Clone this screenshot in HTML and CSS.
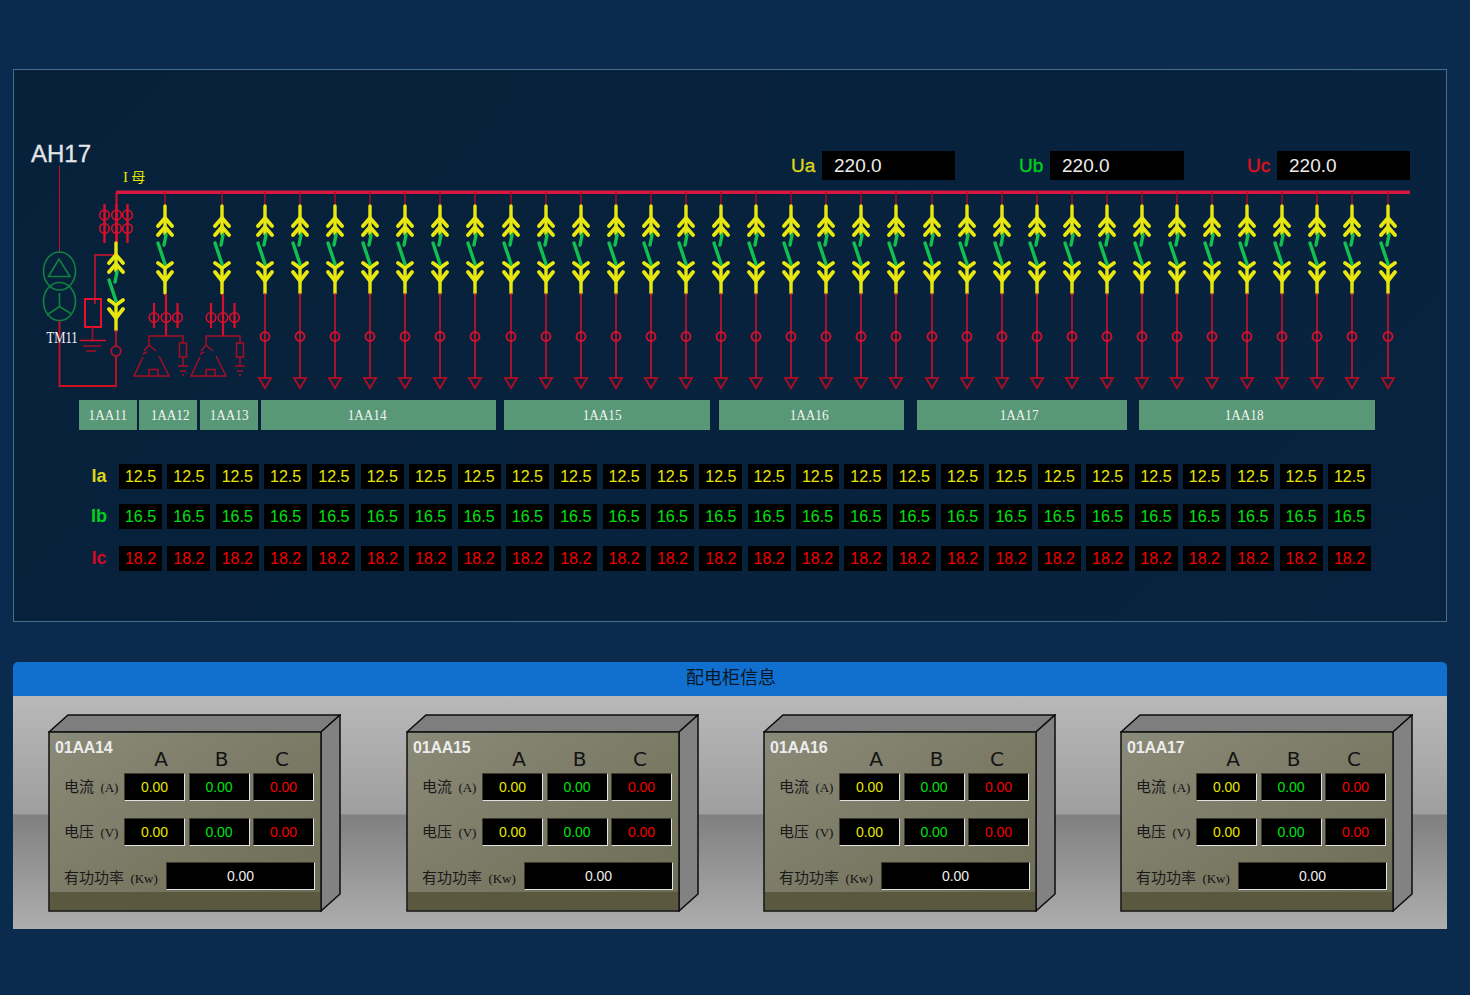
FILE: index.html
```html
<!DOCTYPE html>
<html lang="zh"><head><meta charset="utf-8"><title>AH17</title><link rel="stylesheet" href="styles.css"></head>
<body>
<div id="app"></div>
<script src="app.js"></script>
</body></html>
```
FILE: styles.css
```css
*{box-sizing:border-box}
html,body{margin:0;height:995px;overflow:hidden}
body{background:#0a2b4d;font-family:"Liberation Sans",Arial,sans-serif;padding:69px 23px 0 13px}
.panel{height:553px;border:1px solid #46708a;background:linear-gradient(135deg,#07213a,#08233f)}
.diagram{width:1432px;height:330px;display:block}
.t-title{fill:#e4e6e8;font-size:24px;stroke:#e4e6e8;stroke-width:.3px}
.t-bus{fill:#e6e600;font-size:14px;font-family:"Noto Sans CJK SC",sans-serif}
.t-bus-i{font-family:"Liberation Serif",serif;font-size:15px}
.t-phase{font-size:19px;stroke-width:.35px}
.t-ua{fill:#dcd41a;stroke:#dcd41a}.t-ub{fill:#00d01c;stroke:#00d01c}.t-uc{fill:#e0101c;stroke:#e0101c}
.t-val{fill:#ececec;font-size:19px}
.t-tm{fill:#f4f4f4;font-size:16px;font-family:"Liberation Serif",serif}
.cabs{display:flex;margin-left:65px;height:30px}
.cab{height:30px;background:#589877;color:#f4f4f4;font:15px/30px "Liberation Serif",serif;text-align:center}
.cab span{display:inline-block;transform:scaleX(.88)}
.row{display:flex;margin-left:70px;height:25px}
.row-ia{margin-top:34px}.row-ib{margin-top:15px}.row-ic{margin-top:17px}
.row-label{width:30px;margin-right:5px;font-size:18px;font-weight:700;line-height:24px;text-align:center}
.cells{display:flex;gap:5.36px}
.cell{width:43px;height:25px;background:#000;font-size:16px;line-height:25px;text-align:center}
.y{color:#e6e600}.g{color:#00e010}.r{color:#f00000}
.lbl-y{color:#dcd41a}.lbl-g{color:#00d01c}.lbl-r{color:#d20a24}
.info{margin-top:40px}
.info-head{height:34px;background:#1170cf;border-radius:5px 5px 0 0;color:#0a1826;font:18px/28px "Noto Sans CJK SC",sans-serif;text-align:center;padding-left:2px}
.info-body{display:flex;height:233px;padding:18px 0 0 35px;gap:64px;background:linear-gradient(#b9b9b9 0,#9e9e9e 118px,#808080 119px,#aeaeae 233px)}
.box{position:relative;width:293px;height:198px;flex:none}
.box:nth-child(2){margin-left:1px}
.box-art{position:absolute;inset:0;width:293px;height:198px}
.box-face{position:absolute;left:1px;top:18px;width:272px;height:179px;color:#141414}
.box-top{display:flex;height:41px}
.box-name{width:76px;margin:7px 0 0 6px;color:#ececec;font-size:16px;font-weight:700;letter-spacing:-.2px;white-space:nowrap}
.box-cols{display:flex;gap:.5px;margin-top:15px}
.box-cols span{width:60px;text-align:center;font:20px/24px "DejaVu Sans",sans-serif}
.box-row{display:flex;margin-left:15px;height:28px;gap:3.5px}
.box-row-v{margin-top:17px}.box-row-p{margin-top:16px}
.box-label{width:56.500px;font:15px/26px "Noto Sans CJK SC",sans-serif;white-space:nowrap;color:#1a1a1a}
.box-label small{margin-left:3px;font:13px "Liberation Serif",serif;color:#111}
.box-row-p .box-label{width:98.500px;line-height:30px}
.box-val{width:61px;height:28px;background:#000;border:1px solid;border-color:#3c3b2e #e2e2e2 #e2e2e2 #3c3b2e;font-size:14px;line-height:26px;text-align:center}
.box-val-w{width:149px;color:#eee}
```
FILE: app.js
```js
const xs=[265,300,335,370,405,440,475,511,546,581,616,651,686,721,756,791,826,861,896,932,967,1002,1037,1072,1107,1142,1177,1212,1247,1282,1317,1352,1388];
const R='#d8102c',DR='#a50f25',Y='#e8e810',G='#10c050';
function sw(x,y){
 const up=(p,w)=>`M${x-7} ${y+w}L${x} ${y+p}L${x+7} ${y+w}`;
 return `<g fill="none" stroke-linecap="round">
 <path d="M${x} ${y}V${y+28}M${x} ${y+62}V${y+87}" stroke="${Y}" stroke-width="3.400"/>
 <path d="${up(12,20)}${up(21,29)}${up(62,57)}${up(75,66)}" stroke="${Y}" stroke-width="3.800"/>
 <path d="M${x+1} ${y+29}L${x-1} ${y+39}M${x-7} ${y+37}L${x} ${y+58}" stroke="${G}" stroke-width="3.400"/></g>`;
}
function feeder(x){
 return `<path d="M${x} 192V208" stroke="${DR}" stroke-width="1.5"/>`+sw(x,206)+
 `<path d="M${x} 293V378" stroke="${R}" stroke-width="1.5"/><circle cx="${x}" cy="336.500" r="4.500" fill="none" stroke="${R}" stroke-width="1.8"/>
 <path d="M${x-6} 378H${x+6}L${x} 388Z" fill="none" stroke="${DR}" stroke-width="2"/>`;
}
function pt(x){
 return `<path d="M${x} 192V206" stroke="${DR}" stroke-width="1.5"/>`+sw(x,206)+
 `<path d="M${x+1} 294V336" stroke="${R}" stroke-width="2.2"/>
 <g fill="none" stroke="${R}" stroke-width="1.6"><path d="M${x-11} 303V328M${x+12.500} 303V328" stroke-width="2.2"/>
 <circle cx="${x-11}" cy="317.500" r="4.800"/><circle cx="${x+1}" cy="317.500" r="4.800"/><circle cx="${x+12.500}" cy="317.500" r="4.800"/></g>
 <g fill="none" stroke="${DR}" stroke-width="1.5"><path d="M${x-16} 345V336H${x+18}V343"/>
 <path d="M${x-22} 357L${x-31} 376H${x+4}L${x-6} 356M${x-16} 345L${x-21} 351M${x-16} 345L${x-9} 351M${x-22} 354L${x-18} 352"/><path d="M${x-16} 376V369.500H${x-7}V376"/>
 <rect x="${x+14.500}" y="343" width="7" height="14"/><path d="M${x+18} 357V366M${x+13} 366H${x+23}M${x+15} 371H${x+21}M${x+17} 375H${x+19}"/></g>`;
}
let s=`<svg class="diagram" viewBox="14 70 1432 330" xmlns="http://www.w3.org/2000/svg">`;
s+=`<text class="t-title" x="31" y="162">AH17</text>
<text class="t-bus" x="123" y="182"><tspan class="t-bus-i">I</tspan> 母</text>
<rect x="116" y="190.500" width="1294" height="3.500" fill="#d81840"/>
<text class="t-phase t-ua" x="791" y="172">Ua</text><rect x="822" y="151" width="133" height="29"/><text class="t-val" x="834" y="172">220.0</text>
<text class="t-phase t-ub" x="1019" y="172">Ub</text><rect x="1050" y="151" width="134" height="29"/><text class="t-val" x="1062" y="172">220.0</text>
<text class="t-phase t-uc" x="1247" y="172">Uc</text><rect x="1277" y="151" width="133" height="29"/><text class="t-val" x="1289" y="172">220.0</text>`;
s+=`<path d="M59.500 166V252" stroke="#c01030" stroke-width="1"/>
<g fill="none" stroke="#12803f" stroke-width="1.6"><ellipse cx="59.500" cy="271" rx="16" ry="19"/><ellipse cx="59.500" cy="301.500" rx="16" ry="19"/>
<path d="M59 259L48.500 276.500H70ZM59.500 293V306.500M59.500 306.500L47 315M59.500 306.500L71.500 314"/></g>
<path d="M59.500 321V386H116V356" fill="none" stroke="#cc1020" stroke-width="1.8"/>
<circle cx="116" cy="351" r="4.800" fill="none" stroke="#b81028" stroke-width="1.8"/>
<path d="M116.500 192V245" stroke="${R}" stroke-width="2"/>
<g fill="none" stroke="${R}" stroke-width="1.6"><path d="M104.500 204V243M116.500 204V243M127.500 204V243" stroke-width="2.400"/>
<circle cx="104.500" cy="215" r="4.800"/><circle cx="116.500" cy="215" r="4.800"/><circle cx="127.500" cy="215" r="4.800"/>
<circle cx="104.500" cy="228.500" r="4.800"/><circle cx="116.500" cy="228.500" r="4.800"/><circle cx="127.500" cy="228.500" r="4.800"/></g>
<path d="M95 304V255H115" fill="none" stroke="#a01830" stroke-width="2"/>`+sw(116,243)+
`<path d="M116 330V346" stroke="${R}" stroke-width="1.5"/>
<rect x="85" y="299" width="16" height="28" fill="none" stroke="#e8102a" stroke-width="2"/>
<path d="M92.500 327V340" stroke="${DR}" stroke-width="1.6"/><path d="M79.500 340.500H106" stroke="${R}" stroke-width="1.6"/><path d="M83 346H101M86 351H96" stroke="${DR}" stroke-width="1.6"/>
<text class="t-tm" x="46.500" y="342.500" textLength="31" lengthAdjust="spacingAndGlyphs">TM11</text>`;
s+=pt(165)+pt(222);
xs.forEach(x=>s+=feeder(x));
s+=`</svg>`;
// name, width, gap before, text offset from box centre
const cabs=[['1AA11',58,0,0],['1AA12',58,2,2],['1AA13',58,3,0],['1AA14',235,3,-11.5],['1AA15',206,8,-5],['1AA16',185,9,-2.5],['1AA17',210,13,-3],['1AA18',236,12,-13]];
const rows=[['Ia','12.5','y','lbl-y','ia'],['Ib','16.5','g','lbl-g','ib'],['Ic','18.2','r','lbl-r','ic']];
let h=`<div class="panel">${s}<div class="cabs">`+cabs.map(c=>`<div class="cab" style="width:${c[1]}px;margin-left:${c[2]}px;padding-${c[3]>0?'left':'right'}:${Math.abs(c[3])*2}px"><span>${c[0]}</span></div>`).join('')+`</div>`;
rows.forEach(r=>{h+=`<div class="row row-${r[4]}"><div class="row-label ${r[3]}">${r[0]}</div><div class="cells">`+Array(26).fill(`<div class="cell ${r[2]}">${r[1]}</div>`).join('')+`</div></div>`});
h+=`</div><div class="info"><div class="info-head">配电柜信息</div><div class="info-body">`;
['01AA14','01AA15','01AA16','01AA17'].forEach(n=>{
 const vals=`<div class="box-val y">0.00</div><div class="box-val g">0.00</div><div class="box-val r">0.00</div>`;
 h+=`<div class="box"><svg class="box-art" viewBox="0 0 293 198"><defs><linearGradient id="f${n}" x1="0" y1="0" x2="1" y2="1"><stop offset="0" stop-color="#8a8a78"/><stop offset="1" stop-color="#6c6b54"/></linearGradient></defs>
 <path d="M1 18L20 1H292L273 18Z" fill="#7e7e7e" stroke="#0c0c0c" stroke-width="1.500"/><path d="M273 18L292 1V180L273 197Z" fill="#828282" stroke="#0c0c0c" stroke-width="1.500"/>
 <rect x="1" y="18" width="272" height="179" fill="url(#f${n})" stroke="#101010" stroke-width="1.500"/><rect x="2" y="178" width="270" height="18" fill="#5a583f"/></svg>
 <div class="box-face"><div class="box-top"><div class="box-name">${n}</div><div class="box-cols"><span>A</span><span>B</span><span>C</span></div></div>
 <div class="box-row box-row-a"><div class="box-label">电流 <small>(A)</small></div>${vals}</div>
 <div class="box-row box-row-v"><div class="box-label">电压 <small>(V)</small></div>${vals}</div>
 <div class="box-row box-row-p"><div class="box-label">有功功率 <small>(Kw)</small></div><div class="box-val box-val-w">0.00</div></div></div></div>`;
});
h+=`</div></div>`;
document.getElementById('app').innerHTML=h;
```
